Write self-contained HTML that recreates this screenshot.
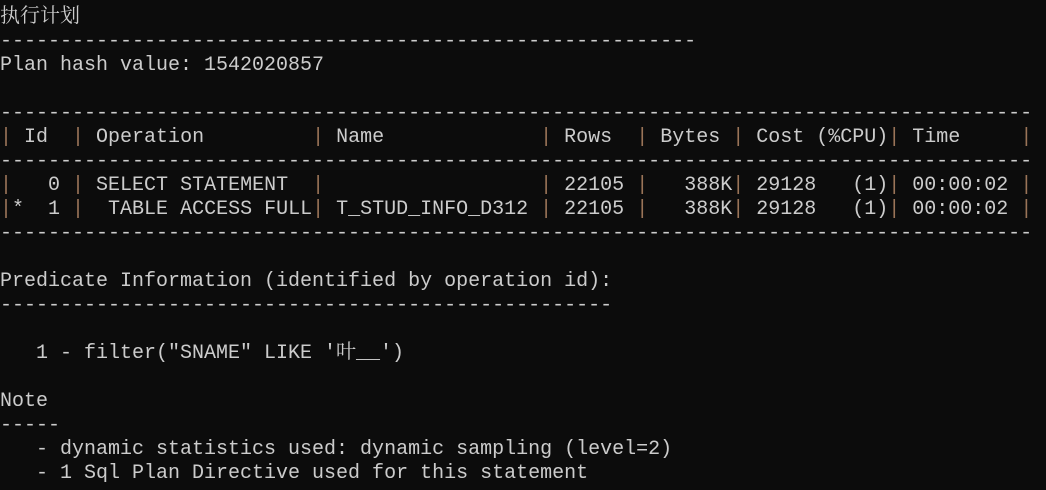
<!DOCTYPE html>
<html><head><meta charset="utf-8"><style>
html,body{margin:0;padding:0;background:#0c0c0c;width:1046px;height:490px;overflow:hidden}
pre{margin:0;padding:6px 0 0 0;font-family:"Liberation Mono","Noto Serif CJK SC",monospace;font-size:20px;line-height:24px;color:#cccccc;white-space:pre}
.b{color:#9a7458}
</style></head><body><pre>执行计划
----------------------------------------------------------
Plan hash value: 1542020857

--------------------------------------------------------------------------------------
<span class="b">|</span> Id  <span class="b">|</span> Operation         <span class="b">|</span> Name             <span class="b">|</span> Rows  <span class="b">|</span> Bytes <span class="b">|</span> Cost (%CPU)<span class="b">|</span> Time     <span class="b">|</span>
--------------------------------------------------------------------------------------
<span class="b">|</span>   0 <span class="b">|</span> SELECT STATEMENT  <span class="b">|</span>                  <span class="b">|</span> 22105 <span class="b">|</span>   388K<span class="b">|</span> 29128   (1)<span class="b">|</span> 00:00:02 <span class="b">|</span>
<span class="b">|</span>*  1 <span class="b">|</span>  TABLE ACCESS FULL<span class="b">|</span> T_STUD_INFO_D312 <span class="b">|</span> 22105 <span class="b">|</span>   388K<span class="b">|</span> 29128   (1)<span class="b">|</span> 00:00:02 <span class="b">|</span>
--------------------------------------------------------------------------------------

Predicate Information (identified by operation id):
---------------------------------------------------

   1 - filter("SNAME" LIKE '叶__')

Note
-----
   - dynamic statistics used: dynamic sampling (level=2)
   - 1 Sql Plan Directive used for this statement</pre></body></html>
